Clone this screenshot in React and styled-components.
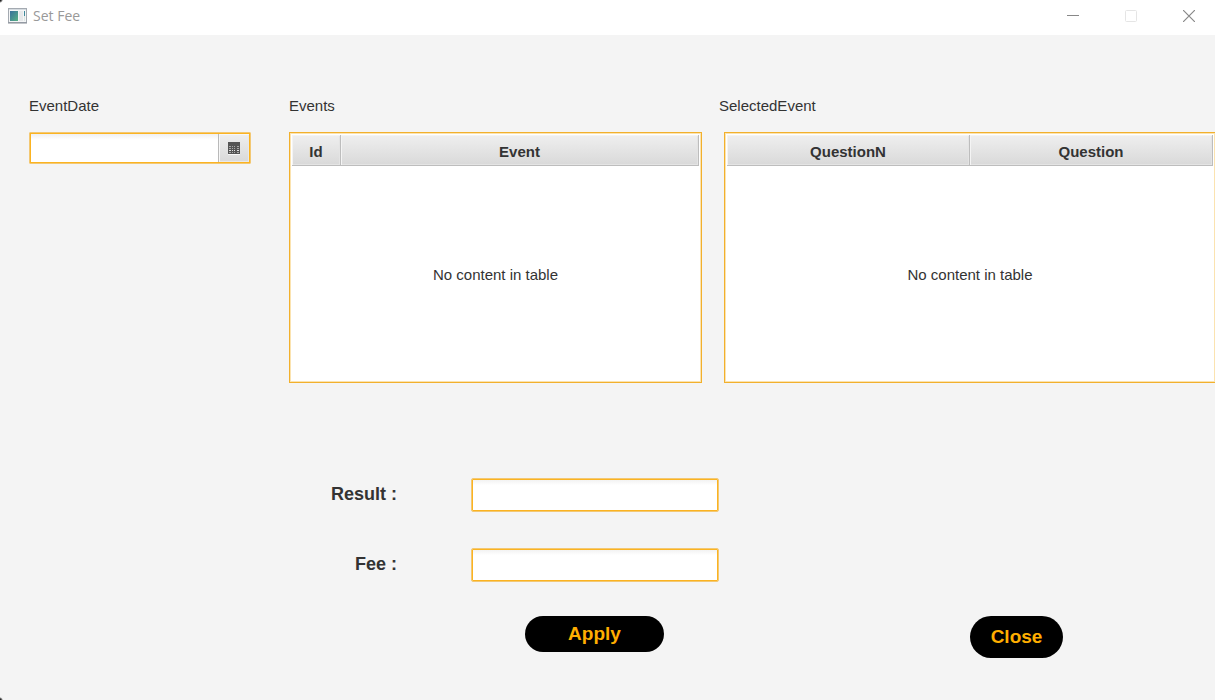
import React from "react";
import styled, { createGlobalStyle } from "styled-components";

const GlobalStyle = createGlobalStyle`
  * { box-sizing: border-box; }
  body {
    margin: 0;
    background: #f4f4f4;
    color: #333;
    font-family: "Liberation Sans", Arial, sans-serif;
    font-size: 15px;
  }
`;

const Window = styled.div`
  position: relative;
  display: flex;
  flex-direction: column;
  min-height: 100vh;
  overflow: hidden;
`;

const Corner = styled.span`
  position: absolute;
  left: 0;
  ${(p) => p.$edge}: 0;
  width: 3px;
  height: 3px;
  background: radial-gradient(circle at 0 ${(p) => (p.$edge === "top" ? "0" : "100%")}, #222 1px, transparent 3px);
`;

const TitleBar = styled.header`
  display: flex;
  align-items: center;
  justify-content: space-between;
  height: 35px;
  padding: 0 8px 4px;
  background: #fff;
`;

const Title = styled.h1`
  display: flex;
  align-items: center;
  gap: 6px;
  margin: 0;
  font: 400 14px/20px "Open Sans", "Noto Sans", sans-serif;
  color: #999;
`;

const WindowControls = styled.div`
  display: flex;
  gap: 22px;
`;

const ControlButton = styled.button`
  display: flex;
  align-items: center;
  justify-content: center;
  width: 36px;
  height: 31px;
  padding: 0;
  border: 0;
  background: none;
`;

const Content = styled.main`
  padding-top: 61px;
`;

const TopSection = styled.section`
  display: grid;
  grid-template-columns: 222px minmax(0, 1fr);
  column-gap: 38px;
  padding-left: 29px;
`;

const TablesRow = styled.div`
  display: grid;
  grid-template-columns: minmax(0, 413fr) minmax(0, 496fr);
  column-gap: 17px;
`;

const Caption = styled.label`
  display: block;
  height: 20px;
  margin-bottom: 16px;
  line-height: 20px;
`;

const DateField = styled.div`
  display: flex;
  height: 32px;
  padding: 1px;
  border: 1px solid #f3c873;
  border-radius: 1px;
  background: #fff;
  box-shadow: inset 0 0 0 1px #fbb321;
`;

const DateInput = styled.input`
  flex: 1;
  min-width: 0;
  padding: 0 8px;
  border: 0;
  outline: 0;
  background: linear-gradient(#f0f0f0, #fff 6px);
  font: inherit;
`;

const DateButton = styled.button`
  display: flex;
  align-items: center;
  justify-content: center;
  width: 31px;
  padding: 1px 0 0;
  border: solid #b9b9b9;
  border-width: 0 0 0 1px;
  background: linear-gradient(#efefef, #d9d9d9);
  box-shadow: inset 1px 1px #f7f7f7, inset -1px -1px #e9e9e9;
`;

const TableFrame = styled.div`
  height: 251px;
  margin-left: ${(p) => (p.$indent ? "5px" : "0")};
  margin-right: ${(p) => (p.$indent ? "-1px" : "0")};
  padding: 2px 2px 0;
  border: 1px solid #f2b02c;
  background: #fff;
  box-shadow: inset 0 0 0 1px #fbe3b0;
`;

const DataTable = styled.table`
  width: 100%;
  height: 100%;
  table-layout: fixed;
  border-spacing: 0;
`;

const HeadCell = styled.th`
  width: ${(p) => p.$width || "auto"};
  height: 31px;
  padding: 4px 0 0;
  border-right: 1px solid #bdbdbd;
  border-bottom: 1px solid #bdbdbd;
  background: linear-gradient(#efefef, #d9d9d9);
  box-shadow: inset 1px 1px #f4f4f4, inset -1px -1px #e4e4e4;
  font-weight: 700;
  line-height: 18px;
`;

const EmptyCell = styled.td`
  padding: 0;
  text-align: center;
`;

const Form = styled.form`
  display: grid;
  grid-template-columns: 68px 248px minmax(0, 1fr);
  column-gap: 74px;
  row-gap: 36px;
  padding: 95px 0 0 329px;
`;

const FieldLabel = styled.label`
  grid-column: 1;
  height: 34px;
  font-size: 18px;
  font-weight: 700;
  line-height: 32px;
  text-align: right;
  white-space: nowrap;
`;

const TextField = styled.input`
  grid-column: 2;
  width: 248px;
  height: 34px;
  padding: 0 8px;
  border: 1px solid #f3c873;
  border-radius: 2px;
  outline: 0;
  background: linear-gradient(#f0f0f0, #fff 6px);
  box-shadow: inset 0 0 0 1px #fbb321;
  font: inherit;
`;

const Actions = styled.div`
  display: flex;
  align-items: flex-start;
  gap: 306px;
  padding: 34px 0 42px 525px;
`;

const PillButton = styled.button`
  width: ${(p) => p.$width};
  height: ${(p) => p.$height};
  flex: none;
  padding: 0 0 1px;
  border: 0;
  border-radius: 21px;
  background: #000;
  color: #ffae00;
  font: 700 19px/22px "Liberation Sans", Arial, sans-serif;
`;

const AppIcon = () => (
  <svg width="19" height="16" viewBox="0 0 19 16" aria-hidden="true">
    <defs>
      <linearGradient id="pane" x1="0" y1="0" x2="1" y2="1">
        <stop offset="0" stopColor="#386f9c" />
        <stop offset="1" stopColor="#57b184" />
      </linearGradient>
    </defs>
    <rect x=".5" y=".5" width="18" height="14" fill="#f4f5f6" stroke="#a4aab1" />
    <path d="M0 15h19" stroke="#858b94" />
    <path d="M1 1.5h17" stroke="#d5dbe0" />
    <rect x="2" y="3" width="8" height="10" fill="url(#pane)" />
    <path d="M11 3h4v10h-4z" fill="#e6e8ea" />
    <path d="M16.500 3v5" stroke="#3f899b" />
    <path d="M16.500 8v5" stroke="#dce7e4" />
  </svg>
);

const CalendarIcon = () => (
  <svg width="12" height="13" viewBox="0 0 12 13" shapeRendering="crispEdges" aria-hidden="true">
    <path d="M0 12h12v1H0z" fill="#f8f8f8" />
    <path d="M0 0h12v12H0z" fill="#555" />
    {[4, 6, 8, 10].map((y) =>
      [1, 4, 6, 9].map((x) => (
        <rect
          key={`${x}-${y}`}
          x={x}
          y={y}
          width={x === 1 || x === 9 ? 2 : 1}
          height="1"
          fill={y === 8 ? "#e0e0e0" : "#a8a8a8"}
        />
      ))
    )}
  </svg>
);

const EmptyTable = ({ id, columns, indent }) => (
  <TableFrame $indent={indent}>
    <DataTable aria-labelledby={id}>
      <thead>
        <tr>
          {columns.map((c) => (
            <HeadCell key={c.name} $width={c.width} scope="col">{c.name}</HeadCell>
          ))}
        </tr>
      </thead>
      <tbody>
        <tr>
          <EmptyCell colSpan={columns.length}>No content in table</EmptyCell>
        </tr>
      </tbody>
    </DataTable>
  </TableFrame>
);

export default function App() {
  return (
    <Window>
      <GlobalStyle />
      <TitleBar>
        <Title><AppIcon />Set Fee</Title>
        <WindowControls>
          <ControlButton type="button" aria-label="Minimize">
            <svg width="12" height="12" viewBox="0 0 12 12"><path d="M0 5.500h12" stroke="#888" /></svg>
          </ControlButton>
          <ControlButton type="button" aria-label="Maximize" disabled>
            <svg width="12" height="12" viewBox="0 0 12 12"><rect x=".5" y=".5" width="11" height="11" rx="1" fill="none" stroke="#e5e5e5" /></svg>
          </ControlButton>
          <ControlButton type="button" aria-label="Close window">
            <svg width="12" height="12" viewBox="0 0 12 12"><path d="M0 0l12 12M12 0L0 12" stroke="#888" strokeWidth="1.200" /></svg>
          </ControlButton>
        </WindowControls>
      </TitleBar>
      <Content>
        <TopSection>
          <div>
            <Caption htmlFor="event-date">EventDate</Caption>
            <DateField>
              <DateInput id="event-date" type="text" />
              <DateButton type="button" aria-label="Choose date"><CalendarIcon /></DateButton>
            </DateField>
          </div>
          <TablesRow>
            <div>
              <Caption as="div" id="events">Events</Caption>
              <EmptyTable id="events" columns={[{ name: "Id", width: "49px" }, { name: "Event" }]} />
            </div>
            <div>
              <Caption as="div" id="selected-event">SelectedEvent</Caption>
              <EmptyTable id="selected-event" indent columns={[{ name: "QuestionN" }, { name: "Question" }]} />
            </div>
          </TablesRow>
        </TopSection>
        <Form id="fee-form" onSubmit={(e) => e.preventDefault()}>
          <FieldLabel htmlFor="result">Result :</FieldLabel>
          <TextField id="result" type="text" />
          <FieldLabel htmlFor="fee">Fee :</FieldLabel>
          <TextField id="fee" type="text" />
        </Form>
        <Actions>
          <PillButton type="submit" form="fee-form" $width="139px" $height="36px">Apply</PillButton>
          <PillButton type="button" $width="93px" $height="42px">Close</PillButton>
        </Actions>
      </Content>
      <Corner $edge="top" />
      <Corner $edge="bottom" />
    </Window>
  );
}
